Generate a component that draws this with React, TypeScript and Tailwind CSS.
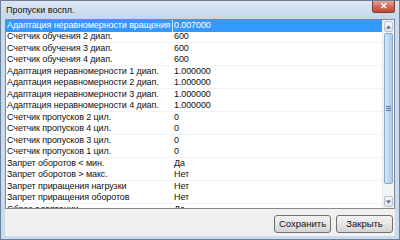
const rows: Array<[string, string]> = [
  ['Адаптация неравномерности вращения', '0.007000'],
  ['Счетчик обучения 2 диап.', '600'],
  ['Счетчик обучения 3 диап.', '600'],
  ['Счетчик обучения 4 диап.', '600'],
  ['Адаптация неравномерности 1 диап.', '1.000000'],
  ['Адаптация неравномерности 2 диап.', '1.000000'],
  ['Адаптация неравномерности 3 диап.', '1.000000'],
  ['Адаптация неравномерности 4 диап.', '1.000000'],
  ['Счетчик пропусков 2 цил.', '0'],
  ['Счетчик пропусков 4 цил.', '0'],
  ['Счетчик пропусков 3 цил.', '0'],
  ['Счетчик пропусков 1 цил.', '0'],
  ['Запрет оборотов < мин.', 'Да'],
  ['Запрет оборотов > макс.', 'Нет'],
  ['Запрет приращения нагрузки', 'Нет'],
  ['Запрет приращения оборотов', 'Нет'],
  ['Сброс адаптации', 'Да'],
];

export default function App() {
  return (
    <div
      className="w-[400px] h-[240px] flex flex-col bg-[#c9dbee] border border-[#6b7f96] overflow-hidden text-[#111]"
      style={{ fontFamily: '"Liberation Sans", Arial, sans-serif' }}
    >
      {/* title bar */}
      <div className="h-[18px] shrink-0 flex items-start justify-between bg-gradient-to-b from-[#dbe6f2] to-[#c3d6eb]">
        <span className="pl-[5px] pt-[4px] text-[9px] leading-[10px]">Пропуски воспл.</span>
        <div className="mr-[4px] w-[23px] h-[12px] rounded-b-[3px] border border-t-0 border-[#7a3a32] bg-gradient-to-b from-[#e3a597] via-[#cf6a56] to-[#c44a34] flex items-center justify-center text-white text-[9px] font-bold leading-none">
          ✕
        </div>
      </div>

      {/* client area */}
      <div className="flex-1 mx-[4px] mb-[3px] bg-[#f0f0f0] flex flex-col">
        <div className="h-[190px] shrink-0 border border-[#828790] bg-white flex">
          <div className="flex-1 overflow-hidden">
            {rows.map(([name, value], i) => (
              <div
                key={i}
                className={
                  i === 0
                    ? 'h-[11.5px] flex items-center text-[9px] leading-none tracking-[-0.1px] bg-[#3399ff] text-white'
                    : i % 2 === 1
                      ? 'h-[11.5px] flex items-center text-[9px] leading-none tracking-[-0.1px] border-b border-[#f1f3f5]'
                      : 'h-[11.5px] flex items-center text-[9px] leading-none tracking-[-0.1px]'
                }
              >
                <span className="w-[166px] shrink-0 pl-[1px] whitespace-nowrap overflow-hidden">{name}</span>
                <span className={i === 0 ? 'pl-[1px] border-l border-[#cfe3ff] h-full flex items-center' : 'pl-[2px]'}>
                  {value}
                </span>
              </div>
            ))}
          </div>

          {/* scrollbar */}
          <div className="w-[12px] flex flex-col bg-[#f3f4f6] border-l border-[#e6e8eb]">
            <div className="h-[11px] m-[1px] rounded-[2px] border border-[#b9c2cc] bg-gradient-to-b from-[#f6f8fa] to-[#dde3ea] flex items-center justify-center">
              <svg width="5" height="4" viewBox="0 0 5 4">
                <path d="M0 3.5 L2.5 0.5 L5 3.5 Z" fill="#4d6185" />
              </svg>
            </div>
            <div className="h-[151px] mx-[1px] rounded-[2px] border border-[#8ca9c9] bg-gradient-to-r from-[#d7e8f8] via-[#bcd8f4] to-[#a9cbee] flex items-center justify-center">
              <div className="flex flex-col gap-[1px]">
                <div className="w-[5px] h-[1px] bg-[#5a7698]" />
                <div className="w-[5px] h-[1px] bg-[#5a7698]" />
                <div className="w-[5px] h-[1px] bg-[#5a7698]" />
              </div>
            </div>
            <div className="flex-1" />
            <div className="h-[11px] m-[1px] rounded-[2px] border border-[#b9c2cc] bg-gradient-to-b from-[#f6f8fa] to-[#dde3ea] flex items-center justify-center">
              <svg width="5" height="4" viewBox="0 0 5 4">
                <path d="M0 0.5 L2.5 3.5 L5 0.5 Z" fill="#4d6185" />
              </svg>
            </div>
          </div>
        </div>

        {/* buttons */}
        <div className="flex justify-end gap-[5px] pt-[6px] pr-[2px]">
          <button className="w-[57px] h-[18px] rounded-[3px] border border-[#707070] bg-gradient-to-b from-[#f2f2f2] via-[#e6e6e6] to-[#d3d3d3] text-[9.5px] leading-none">
            Сохранить
          </button>
          <button className="w-[57px] h-[18px] rounded-[3px] border border-[#707070] bg-gradient-to-b from-[#f2f2f2] via-[#e6e6e6] to-[#d3d3d3] text-[9.5px] leading-none">
            Закрыть
          </button>
        </div>
      </div>
    </div>
  );
}
